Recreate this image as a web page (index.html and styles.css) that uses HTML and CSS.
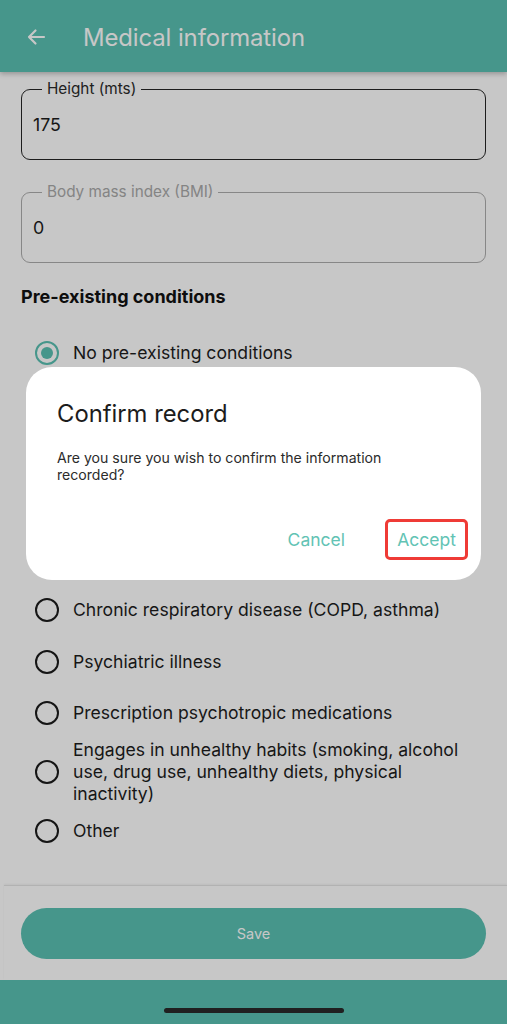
FILE: index.html
```html
<!DOCTYPE html>
<html lang="en">
<head>
<meta charset="utf-8">
<title>Medical information</title>
<link rel="stylesheet" href="styles.css">
</head>
<body>
<div class="screen">
  <header class="appbar">
    <svg class="back" viewBox="0 0 24 24" width="24" height="24"><path d="M20 12H5M11.5 5.5 5 12l6.5 6.5" fill="none" stroke="#fff" stroke-width="2.2" stroke-linecap="round" stroke-linejoin="round"/></svg>
    <h1 class="title">Medical information</h1>
  </header>
  <main class="content">
    <fieldset class="field">
      <legend class="field-label">Height (mts)</legend>
      <div class="field-value">175</div>
    </fieldset>
    <fieldset class="field field-muted">
      <legend class="field-label">Body mass index (BMI)</legend>
      <div class="field-value">0</div>
    </fieldset>
    <h2 class="section">Pre-existing conditions</h2>
    <ul class="radios">
      <li class="radio-item"><span class="radio checked"></span><span class="radio-text">No pre-existing conditions</span></li>
      <li class="radio-item"><span class="radio"></span><span class="radio-text">Hypertension</span></li>
      <li class="radio-item"><span class="radio"></span><span class="radio-text">Diabetes</span></li>
      <li class="radio-item"><span class="radio"></span><span class="radio-text">Cardiovascular disease</span></li>
      <li class="radio-item"><span class="radio"></span><span class="radio-text">Cancer</span></li>
      <li class="radio-item"><span class="radio"></span><span class="radio-text">Chronic respiratory disease (COPD, asthma)</span></li>
      <li class="radio-item"><span class="radio"></span><span class="radio-text">Psychiatric illness</span></li>
      <li class="radio-item"><span class="radio"></span><span class="radio-text">Prescription psychotropic medications</span></li>
      <li class="radio-item"><span class="radio"></span><span class="radio-text">Engages in unhealthy habits (smoking, alcohol use, drug use, unhealthy diets, physical inactivity)</span></li>
      <li class="radio-item"><span class="radio"></span><span class="radio-text">Other</span></li>
    </ul>
  </main>
  <footer class="footer">
    <button class="save">Save</button>
  </footer>
  <div class="bottombar"></div>
</div>

<div class="overlay"></div>

<div class="dialog" role="dialog">
  <h3 class="dialog-title">Confirm record</h3>
  <p class="dialog-body">Are you sure you wish to confirm the information recorded?</p>
  <div class="dialog-actions">
    <button class="dlg-btn">Cancel</button>
    <button class="dlg-btn highlighted">Accept</button>
  </div>
</div>

<div class="home-indicator"></div>
</body>
</html>
```

FILE: styles.css
```css
* { box-sizing: border-box; }
html, body { margin: 0; padding: 0; }
body {
  width: 507px;
  height: 1024px;
  overflow: hidden;
  font-family: Inter, "Noto Sans", sans-serif;
  background: #fff;
  color: #1d1d1d;
  position: relative;
}
.screen {
  height: 1024px;
  display: flex;
  flex-direction: column;
}
.appbar {
  height: 72px;
  flex: none;
  background: #5ac0b2;
  display: flex;
  align-items: center;
  padding: 0 0 0 24px;
  box-shadow: 0 2px 5px rgba(0,0,0,0.25);
  position: relative;
  z-index: 1;
}
.back { display: block; margin-top: 2px; }
.title {
  margin: 2px 0 0 35px;
  font-size: 23.9px;
  font-weight: 400;
  color: #fff;
  letter-spacing: -0.1px;
}
.content {
  flex: 1;
  padding: 9px 21px 0 21px;
}
.field {
  margin: 0 0 24px 0;
  padding: 0 0 0 11px;
  border: 1.5px solid #262626;
  border-radius: 9px;
  height: 79px;
  min-width: 0;
}
.field-muted { border-color: #adadad; border-width: 1.3px; }
.field-label {
  margin-left: 9px;
  padding: 0 5px;
  font-size: 15.3px;
  line-height: 16px;
  color: #2a2a2a;
}
.field-muted .field-label { color: #aaaaaa; }
.field-value {
  font-size: 17.8px;
  line-height: 20px;
  margin-top: 18px;
  color: #1d1d1d;
}
.section {
  margin: 22px 0 0 0;
  font-size: 18px;
  font-weight: 700;
  line-height: 20px;
  color: #111;
}
.radios {
  list-style: none;
  margin: 20px 0 0 0;
  padding: 0 0 0 14px;
}
.radio-item {
  min-height: 51.5px;
  display: flex;
  align-items: center;
  gap: 14px;
}
.radio {
  flex: none;
  width: 24px;
  height: 24px;
  border: 2.6px solid #1b1b1b;
  border-radius: 50%;
  display: flex;
  align-items: center;
  justify-content: center;
}
.radio.checked { border-color: #5ac0b2; }
.radio.checked::after {
  content: "";
  width: 12px;
  height: 12px;
  border-radius: 50%;
  background: #5ac0b2;
}
.radio-text {
  font-size: 17.6px;
  line-height: 22px;
  color: #1d1d1d;
  padding-right: 20px;
}
.footer {
  flex: none;
  border-top: 1px solid #e4e4e4;
  box-shadow: 0 -1px 2px rgba(0,0,0,0.05);
  padding: 22px 21px 21px 21px;
  margin-left: 4px;
}
.save {
  display: block;
  width: 465px;
  margin-left: -4px;
  height: 51px;
  border: none;
  border-radius: 26px;
  background: #5ac0b2;
  color: #fff;
  font-family: Inter, "Noto Sans", sans-serif;
  font-size: 14.5px;
}
.bottombar {
  flex: none;
  height: 44px;
  background: #5ac0b2;
}
.overlay {
  position: absolute;
  inset: 0;
  background: rgba(0,0,0,0.22);
  z-index: 5;
}
.dialog {
  position: absolute;
  top: 367px;
  left: 26px;
  width: 455px;
  height: 213px;
  background: #fff;
  border-radius: 26px;
  z-index: 6;
  padding: 33px 13px 0 31px;
  display: flex;
  flex-direction: column;
}
.dialog-title {
  margin: 0;
  font-size: 23.8px;
  font-weight: 400;
  line-height: 28px;
  color: #1c1c1c;
}
.dialog-body {
  margin: 21px 0 0 0;
  font-size: 14.1px;
  line-height: 17px;
  color: #2b2b2b;
  padding-right: 50px;
}
.dialog-actions {
  margin-top: 36px;
  display: flex;
  justify-content: flex-end;
  align-items: center;
  gap: 40px;
}
.dlg-btn {
  background: none;
  border: none;
  font-family: Inter, "Noto Sans", sans-serif;
  font-size: 17.5px;
  color: #62c3b4;
  padding: 0;
  height: 41px;
}
.dlg-btn.highlighted {
  border: 3px solid #ef3b36;
  border-radius: 5px;
  padding: 0 8px;
  width: 83px;
}
.home-indicator {
  position: absolute;
  left: 164px;
  bottom: 11px;
  width: 180px;
  height: 5px;
  border-radius: 3px;
  background: #202020;
  z-index: 7;
}
```
